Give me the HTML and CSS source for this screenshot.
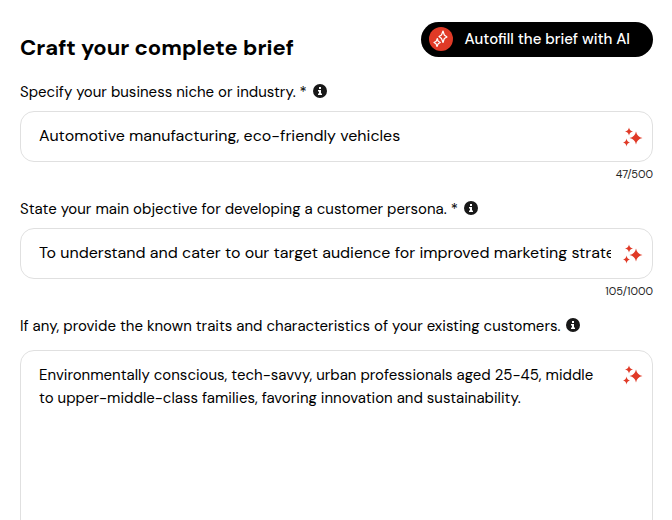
FILE: index.html
```html
<!DOCTYPE html>
<html lang="en">
<head>
    <meta charset="UTF-8">
    <meta name="viewport" content="width=device-width, initial-scale=1.0">
    <title>Craft your complete brief</title>
    <link rel="stylesheet" href="styles.css">
</head>
<body>
    <!-- shared icons -->
    <svg class="icon-defs" aria-hidden="true">
        <symbol id="icon-info" viewBox="0 0 14 14">
            <circle cx="7" cy="7" r="7" fill="#181818"/>
            <path d="M6 3h2v2H6zM5 6h3v3.5h1V11H5V9.500h1v-2H5z" fill="#fff"/>
        </symbol>
        <symbol id="icon-sparkles" viewBox="0 0 20 20">
            <path d="M13 4.500Q14 9.800 19.500 11Q14 12.200 13 17.500Q12 12.200 6.500 11Q12 9.800 13 4.500Z"/>
            <path d="M6 0.500Q6.600 3.900 10 4.500Q6.600 5.100 6 8.500Q5.400 5.100 2 4.500Q5.400 3.900 6 0.500Z"/>
            <path d="M3.500 11.500Q4 14.900 7 15.500Q4 16.100 3.500 19.500Q3 16.100 0 15.500Q3 14.900 3.500 11.500Z"/>
        </symbol>
    </svg>

    <form class="brief">
        <div class="brief-header">
            <h1>Craft your complete brief</h1>
            <button type="button" class="autofill">
                <span class="autofill-icon">
                    <svg viewBox="0 0 24 24" width="24" height="24" fill="none" stroke="#fff" stroke-width="1.200" stroke-linejoin="round">
                        <path d="M14 4L15.300 8L18 10L15.300 11.500L14 15.500L12.500 11.500L10 9.500L12.500 8Z"/>
                        <path d="M8.300 11.500L9.200 14.200L11.300 15.500L9.200 16.700L8 19.500L7 16.700L5 15.500L7.200 14.200Z"/>
                    </svg>
                </span>
                Autofill the brief with AI
            </button>
        </div>

        <div class="field">
            <div class="field-label">
                <label for="niche">Specify your business niche or industry. *</label>
                <svg class="info"><use href="#icon-info"/></svg>
            </div>
            <div class="box">
                <input type="text" id="niche" value="Automotive manufacturing, eco-friendly vehicles">
                <button type="button" class="sparkle" aria-label="Suggest a niche"><svg><use href="#icon-sparkles"/></svg></button>
            </div>
            <div class="counter">47/500</div>
        </div>

        <div class="field">
            <div class="field-label">
                <label for="objective">State your main objective for developing a customer persona. *</label>
                <svg class="info"><use href="#icon-info"/></svg>
            </div>
            <div class="box">
                <input type="text" id="objective" value="To understand and cater to our target audience for improved marketing strategies">
                <button type="button" class="sparkle" aria-label="Suggest an objective"><svg><use href="#icon-sparkles"/></svg></button>
            </div>
            <div class="counter">105/1000</div>
        </div>

        <div class="field">
            <div class="field-label field-label-tall">
                <label for="traits">If any, provide the known traits and characteristics of your existing customers.</label>
                <svg class="info"><use href="#icon-info"/></svg>
            </div>
            <div class="box box-area">
                <textarea id="traits" rows="9">Environmentally conscious, tech-savvy, urban professionals aged 25-45, middle to upper-middle-class families, favoring innovation and sustainability.</textarea>
                <button type="button" class="sparkle" aria-label="Suggest traits"><svg><use href="#icon-sparkles"/></svg></button>
            </div>
        </div>
    </form>
</body>
</html>
```

FILE: styles.css
```css
* {
    box-sizing: border-box;
}

html {
    scrollbar-width: none;
}

body {
    margin: 0;
    background-color: #fff;
    color: #000;
    font-family: "DM Sans", "Inter", sans-serif;
    font-size: 15px;
}

button, input, textarea {
    font-family: inherit;
    color: inherit;
}

.icon-defs {
    display: none;
}

.brief {
    padding: 22px 19px 20px 20px;
}

.brief-header {
    display: flex;
    justify-content: space-between;
    align-items: flex-start;
    margin-bottom: 16px;
}

h1 {
    margin: 10px 0 0;
    font-size: 22px;
    line-height: 32px;
    font-weight: 700;
}

.autofill {
    display: flex;
    align-items: center;
    gap: 11px;
    height: 35px;
    padding: 0 23px 1px 8px;
    border: none;
    border-radius: 18px;
    background-color: #000;
    color: #fff;
    font-size: 15px;
    font-weight: 500;
    cursor: pointer;
}

.autofill-icon {
    display: flex;
    border-radius: 50%;
    background-color: #e03a27;
}

.field {
    margin-bottom: 15px;
}

.field-label {
    display: flex;
    align-items: center;
    gap: 6px;
    height: 24px;
    margin-bottom: 7px;
}

.field-label-tall {
    margin-bottom: 12px;
}

.info {
    width: 14px;
    height: 14px;
    margin-bottom: 2px;
}

.box {
    display: flex;
    align-items: center;
    gap: 12px;
    height: 51px;
    padding: 0 9px 0 18px;
    border: 1px solid #e0e0e0;
    border-radius: 14px;
}

.box input {
    flex: 1;
    min-width: 0;
    padding: 0 0 2px;
    border: none;
    outline: none;
    background: none;
    font-size: 16px;
}

.box textarea {
    flex: 1;
    min-width: 0;
    padding: 0 12px 0 0;
    border: none;
    outline: none;
    resize: none;
    background: none;
    font-size: 15px;
    line-height: 23px;
}

.box-area {
    align-items: flex-start;
    height: auto;
    padding-top: 13px;
    padding-bottom: 13px;
}

.sparkle {
    display: flex;
    padding: 0;
    border: none;
    background: none;
    cursor: pointer;
}

.box-area .sparkle {
    margin-top: 1px;
}

.sparkle svg {
    width: 20px;
    height: 20px;
    fill: #e03a27;
}

.counter {
    margin-top: 4px;
    text-align: right;
    font-size: 11px;
    line-height: 16px;
    color: #222;
}
```
